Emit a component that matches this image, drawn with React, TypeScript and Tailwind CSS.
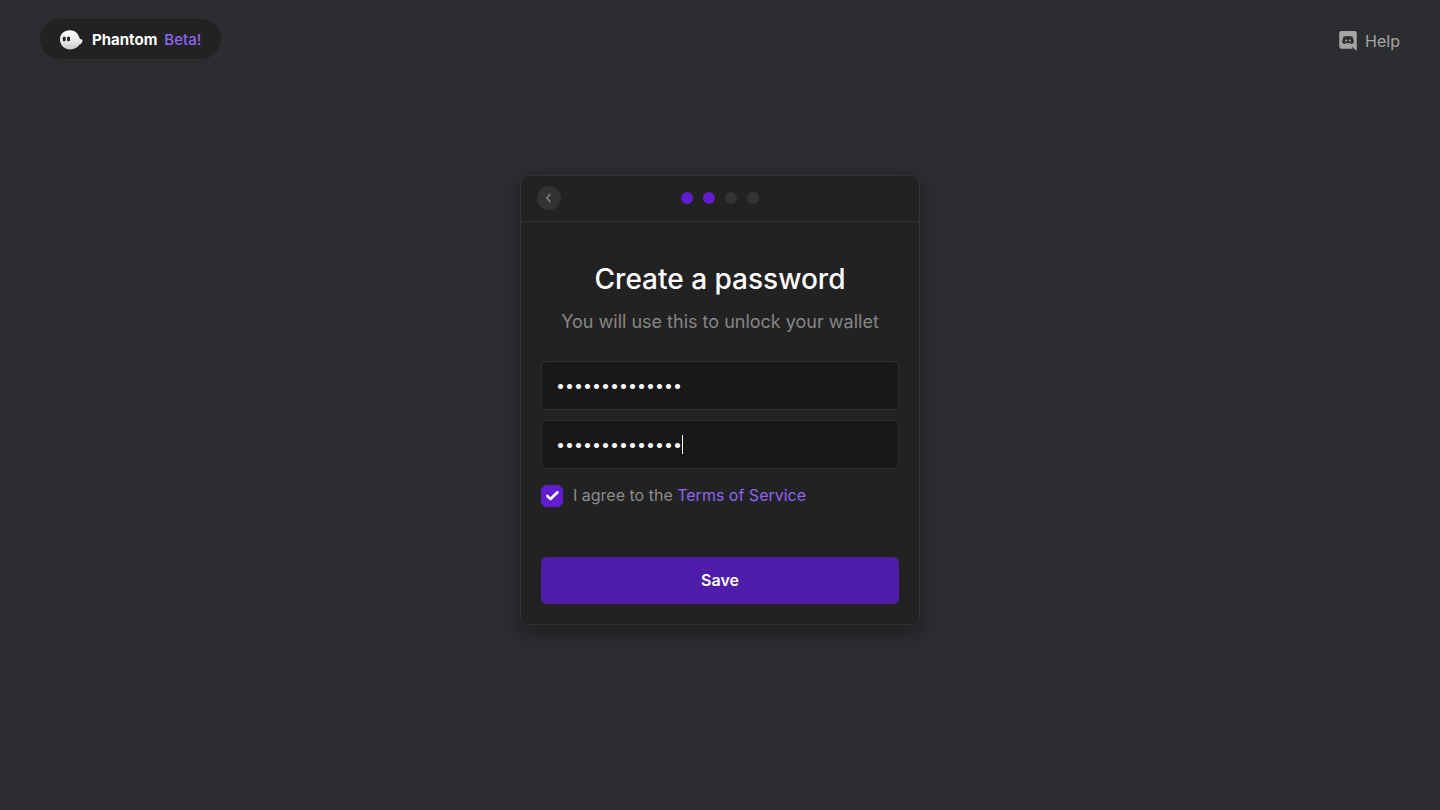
import { useState } from "react";

const STEPS = 4;
const CURRENT_STEP = 2;

function GhostLogo() {
  return (
    <svg width="24" height="20" viewBox="0 0 24 20" aria-hidden="true">
      <defs>
        <linearGradient id="ghost" x1="0" y1="0" x2="0" y2="1">
          <stop offset="0" stopColor="#ffffff" />
          <stop offset="0.6" stopColor="#e8e8e8" />
          <stop offset="1" stopColor="#c8c8c8" />
        </linearGradient>
      </defs>
      <path
        fill="url(#ghost)"
        d="M1 9.800C.8 4 5 .2 10.800 .2c5 0 8 2.800 9.200 6.600.5 1.700 1.400 2.600 2.700 2.700.7.1 1 .6.8 1.400-.4 1.900-1.400 3.100-2.900 3.700C18.800 17.500 15.500 19.400 11.200 19.400 5.300 19.400 1.200 15.400 1 9.800Z"
      />
      <rect x="3.800" y="6.800" width="2.900" height="4.400" rx="1" fill="#222222" />
      <rect x="8.100" y="6.800" width="2.900" height="4.400" rx="1" fill="#222222" />
    </svg>
  );
}

function DiscordIcon() {
  return (
    <svg width="18" height="20" viewBox="0 0 448 512" fill="currentColor" aria-hidden="true">
      <path d="M297.216 243.2c0 15.616-11.52 28.416-26.112 28.416-14.336 0-26.112-12.8-26.112-28.416s11.52-28.416 26.112-28.416c14.592 0 26.112 12.8 26.112 28.416zm-119.552-28.416c-14.592 0-26.112 12.8-26.112 28.416s11.776 28.416 26.112 28.416c14.592 0 26.112-12.8 26.112-28.416.256-15.616-11.52-28.416-26.112-28.416zM448 52.736V512c-64.494-56.994-43.868-38.128-118.784-107.776l13.568 47.36H52.48C23.552 451.584 0 428.032 0 398.848V52.736C0 23.552 23.552 0 52.48 0h343.04C424.448 0 448 23.552 448 52.736zm-72.96 242.688c0-82.432-36.864-149.248-36.864-149.248-36.864-27.648-71.936-26.88-71.936-26.88l-3.584 4.096c43.52 13.312 63.744 32.512 63.744 32.512-60.811-33.329-132.244-33.335-191.232-7.424-9.472 4.352-15.104 7.424-15.104 7.424s21.248-20.224 67.328-33.536l-2.56-3.072s-35.072-.768-71.936 26.88c0 0-36.864 66.816-36.864 149.248 0 0 21.504 37.12 78.08 38.912 0 0 9.472-11.52 17.152-21.248-32.512-9.728-44.8-30.208-44.8-30.208 3.766 2.636 9.976 6.053 10.496 6.4 43.21 24.198 104.588 32.126 159.744 8.96 8.96-3.328 18.944-8.192 29.44-15.104 0 0-12.8 20.992-46.336 30.464 7.68 9.728 16.896 20.736 16.896 20.736 56.576-1.792 78.336-38.912 78.336-38.912z" />
    </svg>
  );
}

type PasswordFieldProps = {
  label: string;
  value: string;
  onChange: (value: string) => void;
  caret?: boolean;
};

function PasswordField({ label, value, onChange, caret }: PasswordFieldProps) {
  return (
    <div className="relative">
      <input
        type="password"
        aria-label={label}
        value={value}
        onChange={(e) => onChange(e.target.value)}
        className="block w-full rounded-md border border-[#2f2f2f] bg-[#181818] px-[14px] py-3 text-base leading-[23px] text-white caret-transparent outline-none"
      />
      {caret && <span className="absolute top-[15px] left-[141px] h-[19px] w-px bg-white" />}
    </div>
  );
}

export default function App() {
  const [password, setPassword] = useState("hauntedwallet1");
  const [confirmation, setConfirmation] = useState("hauntedwallet1");
  const [agreed, setAgreed] = useState(true);

  return (
    <div className="flex min-h-screen flex-col bg-[#2c2d30] font-['Inter',sans-serif]">
      <header className="flex items-center justify-between px-10 pt-[19px]">
        <a href="#home" className="flex h-10 items-center rounded-full bg-[#222222] pt-0.5 pr-5 pl-[19px] text-[15px]">
          <GhostLogo />
          <span className="ml-[9px] font-bold text-white">Phantom</span>
          <span className="ml-[7px] font-medium text-[#8f66f0]">Beta!</span>
        </a>
        <a href="#help" className="flex items-center gap-2 pt-1 text-base text-[#a5a5a5]">
          <DiscordIcon />
          Help
        </a>
      </header>

      <main className="flex flex-1 items-center justify-center px-4 pt-8 pb-[102px]">
        <section className="w-full max-w-[400px] rounded-lg border border-[#323232] bg-[#222222] shadow-[0_8px_20px_rgba(0,0,0,0.35)]">
          <div className="grid h-[46px] grid-cols-3 items-center border-b border-[#323232] px-4">
            <button
              type="button"
              aria-label="Back"
              className="flex size-6 items-center justify-center rounded-full bg-[#333333] text-[#777777]"
            >
              <svg width="8" height="10" viewBox="0 0 8 10" fill="none" stroke="currentColor" strokeWidth="1.800">
                <path d="M5.400 1.200 1.800 5 5.400 8.800" />
              </svg>
            </button>
            <div className="flex justify-center gap-[10px]">
              {Array.from({ length: STEPS }, (_, i) => (
                <span
                  key={i}
                  className={i < CURRENT_STEP ? "size-3 rounded-full bg-[#5f1dce]" : "size-3 rounded-full bg-[#333333]"}
                />
              ))}
            </div>
          </div>

          <form className="px-5 pt-10 pb-5" onSubmit={(e) => e.preventDefault()}>
            <h1 className="text-center text-[28px] leading-[34px] font-medium text-white">Create a password</h1>
            <p className="mt-[15px] text-center text-lg leading-[22px] text-[#868686]">
              You will use this to unlock your wallet
            </p>
            <div className="mt-7 flex flex-col gap-[10px]">
              <PasswordField label="Password" value={password} onChange={setPassword} />
              <PasswordField label="Confirm password" value={confirmation} onChange={setConfirmation} caret />
            </div>
            <div className="mt-4 flex items-start">
              <span className="relative flex size-[22px]">
                <input
                  id="terms"
                  type="checkbox"
                  checked={agreed}
                  onChange={(e) => setAgreed(e.target.checked)}
                  className="size-[22px] appearance-none rounded-md bg-[#333333] checked:bg-[#5f1dce]"
                />
                {agreed && (
                  <svg
                    className="pointer-events-none absolute inset-0"
                    width="22"
                    height="22"
                    viewBox="0 0 22 22"
                    fill="none"
                    stroke="#ffffff"
                    strokeWidth="2.600"
                    strokeLinecap="round"
                    strokeLinejoin="round"
                  >
                    <path d="M6.300 11 9.500 14 16.500 7.300" />
                  </svg>
                )}
              </span>
              <label htmlFor="terms" className="ml-[10px] text-base leading-5 text-[#8c8c8c]">
                I agree to the{" "}
                <a href="#terms-of-service" className="text-[#8f66f0]">
                  Terms of Service
                </a>
              </label>
            </div>
            <button
              type="submit"
              className="mt-[50px] block h-[47px] w-full rounded-md bg-[#4f1da9] text-base font-semibold text-white"
            >
              Save
            </button>
          </form>
        </section>
      </main>
    </div>
  );
}
